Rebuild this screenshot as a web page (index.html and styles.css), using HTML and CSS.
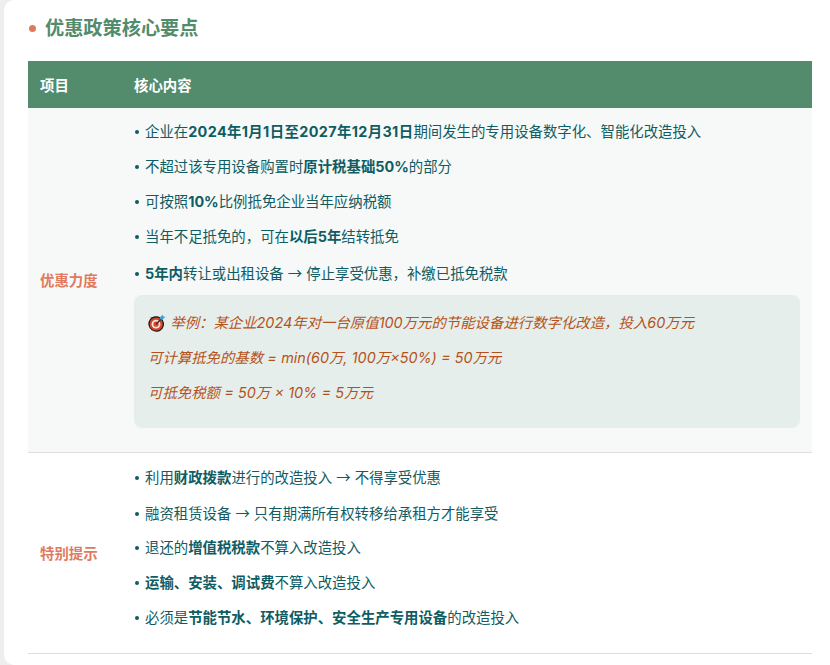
FILE: index.html
```html
<!DOCTYPE html>
<html lang="zh-CN">
<head>
<meta charset="utf-8">
<title>优惠政策核心要点</title>
<link rel="stylesheet" href="styles.css">
</head>
<body>
<main class="card">
  <h2 class="heading"><span class="dot"></span>优惠政策核心要点</h2>
  <table class="policy">
    <thead>
      <tr><th class="col-a">项目</th><th>核心内容</th></tr>
    </thead>
    <tbody>
      <tr class="shaded">
        <td class="label">优惠力度</td>
        <td class="content">
          <ul>
            <li>企业在<b class="date">2024年1月1日至2027年12月31日</b>期间发生的专用设备数字化、智能化改造投入</li>
            <li>不超过该专用设备购置时<b>原计税基础50%</b>的部分</li>
            <li>可按照<b>10%</b>比例抵免企业当年应纳税额</li>
            <li>当年不足抵免的，可在<b>以后5年</b>结转抵免</li>
            <li><b>5年内</b>转让或出租设备 <span class="arrow">→</span> 停止享受优惠，补缴已抵免税款</li>
          </ul>
          <div class="example">
            <p><svg class="target" viewBox="0 0 18 18" aria-hidden="true"><ellipse cx="8.2" cy="10" rx="7.9" ry="7.7" transform="rotate(35 8.2 10)" fill="#1c1c1c"/><circle cx="8.2" cy="10" r="6.6" fill="#d8432a"/><circle cx="8" cy="10.2" r="4.4" fill="#f3e7dc"/><circle cx="8" cy="10.2" r="2.6" fill="#d8432a"/><path d="M8 10.2 14 4.2" stroke="#333" stroke-width="1.5"/><path d="M11.8 3.6 14.6.8l.8 1.6 1.9.4-2.8 2.9-2.4-.4z" fill="#3f9fd8"/></svg> 举例：某企业2024年对一台原值100万元的节能设备进行数字化改造，投入60万元</p>
            <p>可计算抵免的基数 = min(60万, 100万×50%) = 50万元</p>
            <p>可抵免税额 = 50万 × 10% = 5万元</p>
          </div>
        </td>
      </tr>
      <tr>
        <td class="label">特别提示</td>
        <td class="content">
          <ul>
            <li>利用<b>财政拨款</b>进行的改造投入 <span class="arrow">→</span> 不得享受优惠</li>
            <li>融资租赁设备 <span class="arrow">→</span> 只有期满所有权转移给承租方才能享受</li>
            <li>退还的<b>增值税税款</b>不算入改造投入</li>
            <li><b>运输、安装、调试费</b>不算入改造投入</li>
            <li>必须是<b>节能节水、环境保护、安全生产专用设备</b>的改造投入</li>
          </ul>
        </td>
      </tr>
    </tbody>
  </table>
</main>
</body>
</html>
```
FILE: styles.css
```css
* { box-sizing: border-box; }
html, body { margin: 0; height: 665px; overflow: hidden; }
body {
  background: #eeeeee;
  font-family: Inter, "Noto Sans CJK SC", sans-serif;
  font-size: 14.4px;
  color: #0f5c63;
}
.card {
  margin: 0 -12px 0 4px;
  height: 665px;
  padding: 14px 30px 0 24px;
  background: #ffffff;
  border-radius: 10px;
}
.heading {
  display: flex;
  align-items: center;
  margin: 0 0 19px;
  height: 28px;
  font-size: 19.2px;
  line-height: 28px;
  font-weight: 700;
  color: #528c6d;
}
.dot {
  width: 7px;
  height: 7px;
  margin: 0 9px 0 1px;
  border-radius: 50%;
  background: #e07a5f;
}
.policy {
  width: 784px;
  border-collapse: collapse;
  table-layout: fixed;
}
.policy th {
  height: 47px;
  padding: 0 12px;
  background: #528c6d;
  color: #ffffff;
  font-size: 14.4px;
  font-weight: 700;
  text-align: left;
}
.col-a { width: 94px; }
.policy td { border-bottom: 1px solid #dedede; padding: 0; }
.shaded td { background: #f6f9f8; }
.policy .label {
  padding: 0 12px;
  color: #e07a5f;
  font-weight: 700;
}
.policy .content { padding: 6.7px 12px 17.3px; }
.policy .shaded .content, .shaded .content { padding: 5.8px 12px 24px; }
.content ul { margin: 0; padding: 0; list-style: none; }
.content li {
  height: 35.2px;
  line-height: 35.2px;
  white-space: nowrap;
}
.content li::before {
  content: "";
  display: inline-block;
  width: 4px;
  height: 4px;
  margin: 0 6px 2px 1px;
  border-radius: 50%;
  background: #0f5c63;
  vertical-align: middle;
}
.content b { font-weight: 700; }
.content .date { letter-spacing: 0.37px; }
.arrow { font-family: "Noto Sans CJK SC", sans-serif; }
.example {
  margin-top: 5px;
  padding: 10px 14px 17px;
  height: 133px;
  border-radius: 8px;
  background: #e5eeea;
  color: #b5521b;
  font-style: italic;
  word-spacing: 0.2px;
}
.example p {
  margin: 0;
  height: 35.2px;
  line-height: 35.2px;
  white-space: nowrap;
}
.target {
  width: 18px;
  height: 18px;
  vertical-align: -4px;
}
```
